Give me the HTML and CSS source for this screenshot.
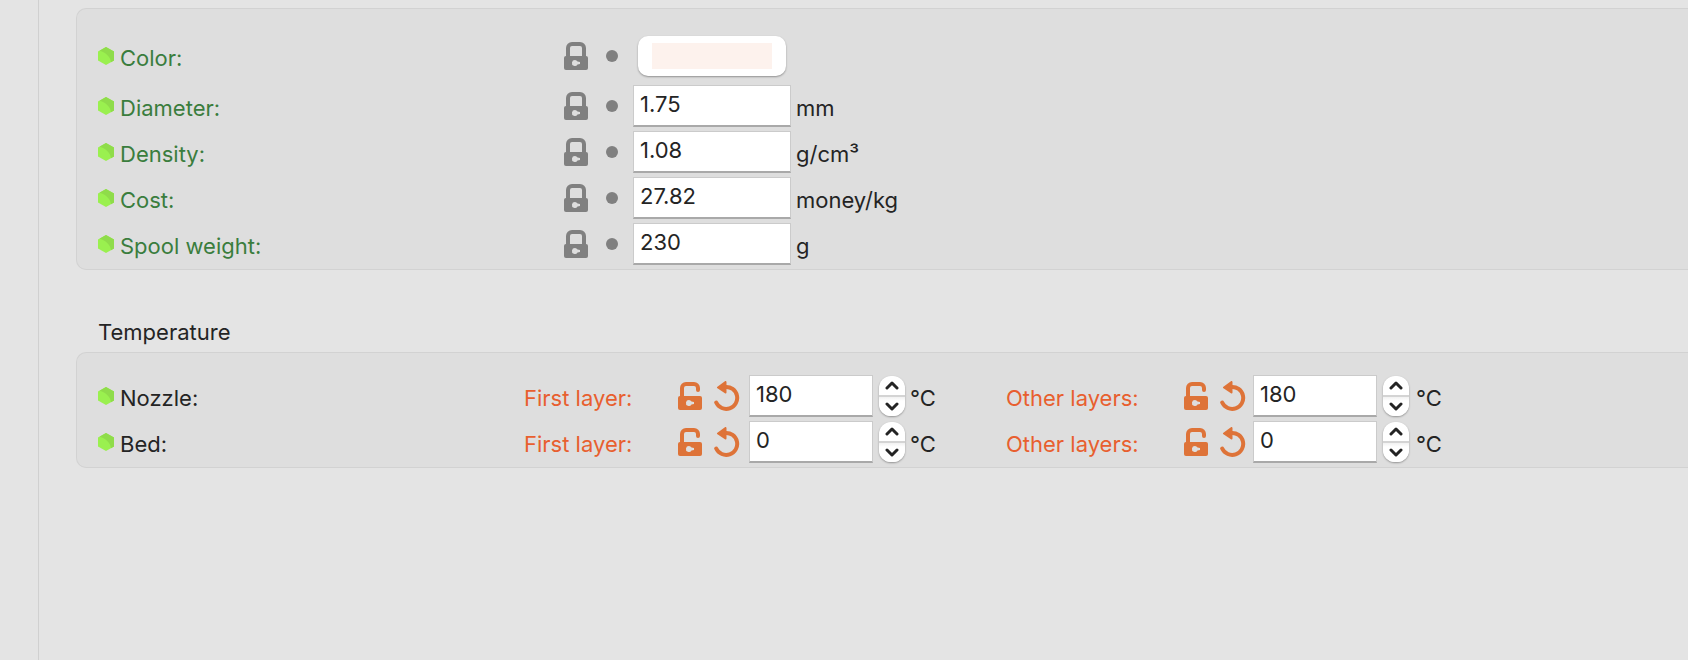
FILE: index.html
```html
<!DOCTYPE html>
<html lang="en">
<head>
<meta charset="utf-8">
<title>Filament settings</title>
<link rel="stylesheet" href="styles.css">
</head>
<body>
<svg class="sprite" aria-hidden="true">
  <symbol id="hex" viewBox="0 0 16 18">
    <path fill="#9af04f" d="M8 0l8 4.500v9L8 18l-8-4.500v-9z"/>
    <path fill="#8fdc4a" d="M8 0l8 4.500v9l-3 1.700C12.500 10 8 5.500 1.500 3.700z"/>
  </symbol>
  <symbol id="locked" viewBox="0 0 24 28">
    <path fill="none" stroke="currentColor" stroke-width="4" d="M4 16V6a4 4 0 0 1 4-4h8a4 4 0 0 1 4 4v10"/>
    <rect y="14" width="24" height="14" rx="2" fill="currentColor"/>
    <path fill="#dedede" d="M11 18a3 3 0 1 0 2.500 4.500L16 22v-2l-2.500-0.500A3 3 0 0 0 11 18z"/>
  </symbol>
  <symbol id="unlocked" viewBox="0 0 24 28">
    <path fill="none" stroke="currentColor" stroke-width="4" stroke-linecap="round" d="M4 16V6a4 4 0 0 1 4-4h8a4 4 0 0 1 4 4v2"/>
    <rect y="14" width="24" height="14" rx="2" fill="currentColor"/>
    <path fill="#dedede" d="M11 18a3 3 0 1 0 2.500 4.500L16 22v-2l-2.500-0.500A3 3 0 0 0 11 18z"/>
  </symbol>
  <symbol id="undo" viewBox="0 0 26 30">
    <path fill="none" stroke="currentColor" stroke-width="4" stroke-linecap="round" d="M11 6A11 11 0 1 1 2.200 21.500"/>
    <path fill="currentColor" stroke="currentColor" stroke-width="2" stroke-linejoin="round" d="M4 6.500L11.500 1v10.500z"/>
  </symbol>
  <symbol id="up" viewBox="0 0 14 9">
    <path fill="none" stroke="currentColor" stroke-width="3" stroke-linecap="round" stroke-linejoin="round" d="M2 7l5-5 5 5"/>
  </symbol>
  <symbol id="down" viewBox="0 0 14 9">
    <path fill="none" stroke="currentColor" stroke-width="3" stroke-linecap="round" stroke-linejoin="round" d="M2 2l5 5 5-5"/>
  </symbol>
</svg>
<div class="page">
  <div class="gutter"></div>
  <main class="content">
    <section class="panel panel-filament" aria-label="Filament">
      <div class="row row-color">
        <svg class="hex"><use href="#hex"/></svg>
        <label class="label saved" for="color">Color:</label>
        <button class="icon" type="button" aria-label="Lock color"><svg class="lock"><use href="#locked"/></svg></button>
        <span class="dot"></span>
        <input class="swatch" id="color" type="color" value="#fdf2ed">
      </div>
      <div class="row">
        <svg class="hex"><use href="#hex"/></svg>
        <label class="label saved" for="diameter">Diameter:</label>
        <button class="icon" type="button" aria-label="Lock diameter"><svg class="lock"><use href="#locked"/></svg></button>
        <span class="dot"></span>
        <input class="field" id="diameter" type="text" value="1.75">
        <span class="unit">mm</span>
      </div>
      <div class="row">
        <svg class="hex"><use href="#hex"/></svg>
        <label class="label saved" for="density">Density:</label>
        <button class="icon" type="button" aria-label="Lock density"><svg class="lock"><use href="#locked"/></svg></button>
        <span class="dot"></span>
        <input class="field" id="density" type="text" value="1.08">
        <span class="unit">g/cm³</span>
      </div>
      <div class="row">
        <svg class="hex"><use href="#hex"/></svg>
        <label class="label saved" for="cost">Cost:</label>
        <button class="icon" type="button" aria-label="Lock cost"><svg class="lock"><use href="#locked"/></svg></button>
        <span class="dot"></span>
        <input class="field" id="cost" type="text" value="27.82">
        <span class="unit">money/kg</span>
      </div>
      <div class="row">
        <svg class="hex"><use href="#hex"/></svg>
        <label class="label saved" for="spool">Spool weight:</label>
        <button class="icon" type="button" aria-label="Lock spool weight"><svg class="lock"><use href="#locked"/></svg></button>
        <span class="dot"></span>
        <input class="field" id="spool" type="text" value="230">
        <span class="unit">g</span>
      </div>
    </section>

    <h2 class="heading">Temperature</h2>
    <section class="panel panel-temperature" aria-label="Temperature">
      <div class="row row-temp">
        <svg class="hex"><use href="#hex"/></svg>
        <span class="label">Nozzle:</span>
        <div class="group first">
          <label class="label changed" for="nozzle-first">First layer:</label>
          <button class="icon" type="button" aria-label="Unlock"><svg class="lock"><use href="#unlocked"/></svg></button>
          <button class="icon" type="button" aria-label="Revert"><svg class="undo"><use href="#undo"/></svg></button>
          <input class="field" id="nozzle-first" type="text" inputmode="numeric" value="180">
          <span class="stepper"><button type="button" aria-label="Increase"><svg><use href="#up"/></svg></button><button type="button" aria-label="Decrease"><svg><use href="#down"/></svg></button></span>
          <span class="unit">°C</span>
        </div>
        <div class="group other">
          <label class="label changed" for="nozzle-other">Other layers:</label>
          <button class="icon" type="button" aria-label="Unlock"><svg class="lock"><use href="#unlocked"/></svg></button>
          <button class="icon" type="button" aria-label="Revert"><svg class="undo"><use href="#undo"/></svg></button>
          <input class="field" id="nozzle-other" type="text" inputmode="numeric" value="180">
          <span class="stepper"><button type="button" aria-label="Increase"><svg><use href="#up"/></svg></button><button type="button" aria-label="Decrease"><svg><use href="#down"/></svg></button></span>
          <span class="unit">°C</span>
        </div>
      </div>
      <div class="row row-temp">
        <svg class="hex"><use href="#hex"/></svg>
        <span class="label">Bed:</span>
        <div class="group first">
          <label class="label changed" for="bed-first">First layer:</label>
          <button class="icon" type="button" aria-label="Unlock"><svg class="lock"><use href="#unlocked"/></svg></button>
          <button class="icon" type="button" aria-label="Revert"><svg class="undo"><use href="#undo"/></svg></button>
          <input class="field" id="bed-first" type="text" inputmode="numeric" value="0">
          <span class="stepper"><button type="button" aria-label="Increase"><svg><use href="#up"/></svg></button><button type="button" aria-label="Decrease"><svg><use href="#down"/></svg></button></span>
          <span class="unit">°C</span>
        </div>
        <div class="group other">
          <label class="label changed" for="bed-other">Other layers:</label>
          <button class="icon" type="button" aria-label="Unlock"><svg class="lock"><use href="#unlocked"/></svg></button>
          <button class="icon" type="button" aria-label="Revert"><svg class="undo"><use href="#undo"/></svg></button>
          <input class="field" id="bed-other" type="text" inputmode="numeric" value="0">
          <span class="stepper"><button type="button" aria-label="Increase"><svg><use href="#up"/></svg></button><button type="button" aria-label="Decrease"><svg><use href="#down"/></svg></button></span>
          <span class="unit">°C</span>
        </div>
      </div>
    </section>
  </main>
</div>
</body>
</html>
```

FILE: styles.css
```css
* {
  box-sizing: border-box;
}

body {
  margin: 0;
  background: #e4e4e4;
  color: #242424;
  font: 22px/28px Inter, "Liberation Sans", sans-serif;
}

.sprite {
  display: none;
}

.page {
  display: flex;
  min-height: 100vh;
}

.gutter {
  flex: none;
  width: 39px;
  border-right: 1px solid #d0d0d0;
}

.content {
  flex: 1;
  min-width: 0;
  padding: 8px 0 0 37px;
}

.panel {
  padding: 20px 0 2px 21px;
  border: 1px solid #d2d2d2;
  border-right: 0;
  border-radius: 10px 0 0 10px;
  background: #dedede;
}

.panel-filament {
  padding-top: 24px;
}

.heading {
  margin: 48px 0 6px 22px;
  font-size: 22px;
  font-weight: 400;
}

.row {
  display: grid;
  grid-template-columns: 22px 444px 42px 27px 158px auto;
  align-items: center;
  height: 46px;
}

.row-color {
  margin-bottom: 4px;
}

.row-temp {
  grid-template-columns: 22px 404px 482px auto;
}

.group {
  display: grid;
  grid-template-columns: 154px 36px 35px 124px 37px auto;
  align-items: center;
}

.group.other {
  grid-template-columns: 178px 36px 33px 124px 39px auto;
}

.hex {
  width: 16px;
  height: 18px;
}

.label,
.unit {
  padding-top: 4px;
  white-space: nowrap;
}

.unit {
  padding-left: 5px;
}

.group .unit {
  padding-left: 0;
}

.saved {
  color: #3a7d3d;
}

.changed {
  color: #e85f2f;
}

.icon {
  display: flex;
  justify-content: flex-start;
  padding: 0;
  border: 0;
  background: none;
  color: #808080;
}

.group .icon {
  color: #de7338;
}

.lock {
  width: 24px;
  height: 28px;
}

.undo {
  width: 26px;
  height: 30px;
}

.dot {
  width: 12px;
  height: 12px;
  border-radius: 50%;
  background: #808080;
}

.field {
  width: 100%;
  height: 42px;
  padding: 0 6px 4px;
  border: 1px solid #cbcbcb;
  border-bottom: 2px solid #a9a9a9;
  border-radius: 0;
  outline: 0;
  background: #fff;
  color: #242424;
  font: inherit;
}

.swatch {
  appearance: none;
  width: 148px;
  height: 40px;
  margin-left: 5px;
  padding: 7px 14px;
  border: 0;
  border-radius: 10px;
  background: #fff;
  box-shadow: 0 1px 2px #00000059;
}

.swatch::-webkit-color-swatch-wrapper {
  padding: 0;
}

.swatch::-webkit-color-swatch {
  border: 0;
  border-radius: 0;
}

.stepper {
  display: flex;
  flex-direction: column;
  width: 26px;
  height: 40px;
  margin-left: 6px;
  overflow: hidden;
  border-radius: 12px;
  background: #fff;
  box-shadow: 0 1px 2px #00000059;
}

.stepper button {
  display: flex;
  flex: 1;
  align-items: center;
  justify-content: center;
  padding: 0;
  border: 0;
  background: none;
  color: #242424;
}

.stepper button + button {
  border-top: 2px solid #d4d4d4;
  background: linear-gradient(#f1f1f1, #fff 4px);
}

.stepper svg {
  width: 14px;
  height: 9px;
}
```
